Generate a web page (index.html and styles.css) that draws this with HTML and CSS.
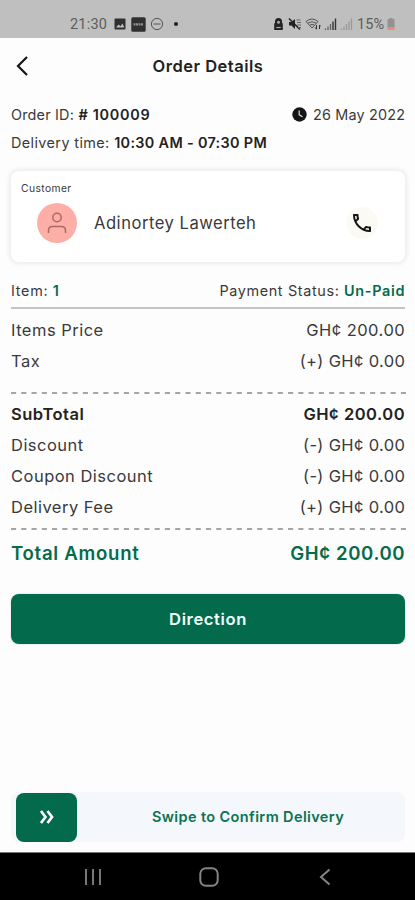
FILE: index.html
```html
<!DOCTYPE html>
<html lang="en">
<head>
<meta charset="utf-8">
<meta name="viewport" content="width=device-width, initial-scale=1">
<title>Order Details</title>
<link rel="stylesheet" href="styles.css">
</head>
<body>
<div class="screen">
  <div class="status-bar">
    <div class="status-left">
      <span class="clock">21:30</span>
      <svg class="s-photo" width="12" height="12" viewBox="0 0 12 12"><rect x=".5" y=".5" width="11" height="11" rx="1" fill="#303030"/><path d="M2 9.500l2.500-3 2 1.700L8.500 5.500l1.800 4z" fill="#bdbdbd"/></svg>
      <svg class="s-app" width="15" height="15" viewBox="0 0 15 15"><rect x=".3" y=".3" width="14.400" height="14.400" rx="1.500" fill="#303030"/><path d="M2.500 7.300h10" stroke="#8f8f8f" stroke-width="2.200" stroke-dasharray="2 .5"/></svg>
      <svg class="s-dnd" width="14" height="14" viewBox="0 0 14 14" fill="none" stroke="#555"><circle cx="7" cy="7" r="5.600"/><path d="M3.500 7h7"/></svg>
      <span class="dot"></span>
    </div>
    <div class="status-right">
      <svg class="s-lock" width="11" height="14" viewBox="0 0 11 14"><path d="M1.200 13V6.500L2 6V4.500a3.500 3.500 0 0 1 7 0V6l.8.5V13z" fill="#222"/><circle cx="5.500" cy="5.200" r="1.500" fill="#aaa"/><path d="M3.300 10.500h4.400" stroke="#aaa" stroke-width="1.200"/></svg>
      <svg width="14" height="14" viewBox="0 0 14 14"><path d="M1 5h2.500L7 2v10L3.500 8.500H1z" fill="#222"/><path d="M1 1.500l11 11" stroke="#222" stroke-width="1.500"/><path d="M8.500 3h4M9 5.500h4M9 8h4M10 10.500h3" stroke="#666"/></svg>
      <svg width="16" height="14" viewBox="0 0 16 14" fill="none" stroke="#555"><path d="M1 4.500q6-5 12 0L7 11z"/><path d="M3 6.200q4-3 8 0M5 8q2-1.400 4 0"/><path d="M11.500 8v4M10 10.500l1.500 1.800M14.500 12V8M16 9.500L14.500 8" stroke="#333"/></svg>
      <svg width="13" height="14" viewBox="0 0 13 14"><path d="M1.500 11.500v1.500M4 9.500V13M6.500 7v6" stroke="#666" stroke-width="1.300"/><path d="M9 4.500V13M11.500 1.500V13" stroke="#333" stroke-width="1.400"/></svg>
      <svg width="13" height="14" viewBox="0 0 13 14"><path d="M1.500 11.500v1.500M4 9.500V13M6.500 7v6M9 4.500V13M11.500 1.500V13" stroke="#999" stroke-width="1.300"/></svg>
      <span class="battery-text">15%</span>
      <svg width="8" height="14" viewBox="0 0 8 14"><path d="M2.500 1h3v1H7.500v9H.5V2h2z" fill="#929292"/><path d="M.5 10h7v3h-7z" fill="#ee8b78"/></svg>
    </div>
  </div>

  <header class="app-header">
    <svg class="back" width="14" height="22" viewBox="0 0 14 22"><path d="M12 2L3 11l9 9" fill="none" stroke="#151515" stroke-width="2.200"/></svg>
    <h1>Order Details</h1>
  </header>

  <main class="content">
    <div class="meta">
      <div class="pair"><span class="t-order">Order ID:</span><b class="t-num"># 100009</b></div>
      <div class="date">
        <svg width="15" height="15" viewBox="0 0 15 15"><circle cx="7.500" cy="7.500" r="7.200" fill="#151515"/><path d="M7.200 3.500v4.300l3.300 2" fill="none" stroke="#ddd" stroke-width="1.200"/></svg>
        <span class="t-date">26 May 2022</span>
      </div>
    </div>
    <div class="meta delivery"><div class="pair"><span class="t-dtime">Delivery time:</span><b class="t-time">10:30 AM - 07:30 PM</b></div></div>

    <section class="card">
      <div class="card-label">Customer</div>
      <div class="customer">
        <div class="avatar"><svg width="20" height="22" viewBox="0 0 20 22" fill="none" stroke="#a96a65" stroke-width="1.500"><circle cx="10" cy="5.500" r="4.200"/><path d="M1.500 21v-2.500q0-4 4-4h9q4 0 4 4V21"/></svg></div>
        <span class="name">Adinortey Lawerteh</span>
        <div class="call"><svg width="24" height="24" viewBox="0 0 24 24"><path fill="#151515" d="M6.540 5c.06.890.210 1.760.450 2.590l-1.200 1.200c-.410-1.200-.670-2.470-.760-3.790h1.510m9.860 12.020c.850.240 1.720.390 2.600.450v1.490c-1.320-.090-2.590-.350-3.800-.750l1.200-1.190M7.500 3H4c-.550 0-1 .450-1 1 0 9.390 7.610 17 17 17 .550 0 1-.450 1-1v-3.490c0-.550-.450-1-1-1-1.240 0-2.450-.200-3.570-.570-.360-.120-.750-.020-1.020.240l-2.200 2.200c-2.830-1.450-5.150-3.760-6.590-6.590l2.200-2.200c.280-.280.360-.670.250-1.020C8.700 6.450 8.500 5.250 8.500 4c0-.550-.450-1-1-1z"/></svg></div>
      </div>
    </section>

    <div class="item-row">
      <div class="pair"><span class="t-item">Item:</span><b class="green">1</b></div>
      <div class="pair"><span class="t-pay">Payment Status:</span><b class="green t-unpaid">Un-Paid</b></div>
    </div>

    <div class="rows first">
      <div class="row"><span>Items Price</span><span class="amt">GH¢ 200.00</span></div>
      <div class="row"><span>Tax</span><span class="amt signed">(+) GH¢ 0.00</span></div>
    </div>
    <svg class="dash" width="395" height="2"><path d="M0 1h395" stroke="#888" stroke-width="1.600" stroke-dasharray="5.130 5.130"/></svg>
    <div class="rows second">
      <div class="row strong"><span>SubTotal</span><span class="amt">GH¢ 200.00</span></div>
      <div class="row"><span>Discount</span><span class="amt signed">(-) GH¢ 0.00</span></div>
      <div class="row"><span>Coupon Discount</span><span class="amt signed">(-) GH¢ 0.00</span></div>
      <div class="row"><span>Delivery Fee</span><span class="amt signed">(+) GH¢ 0.00</span></div>
    </div>
    <svg class="dash" width="395" height="2"><path d="M0 1h395" stroke="#888" stroke-width="1.600" stroke-dasharray="5.130 5.130"/></svg>
    <div class="total"><span class="t-total">Total Amount</span><span class="t-sum">GH¢ 200.00</span></div>

    <button class="direction">Direction</button>

    <div class="swipe">
      <div class="thumb"><svg width="16" height="16" viewBox="0 0 16 16" fill="none" stroke="#fff" stroke-width="2.700"><path d="M2 2l4.500 6L2 14M8.500 2L13 8l-4.500 6"/></svg></div>
      <span class="swipe-text">Swipe to Confirm Delivery</span>
    </div>
  </main>

  <nav class="nav-bar">
    <svg width="18" height="18" viewBox="0 0 18 18"><path d="M2 1v16M9 1v16M16 1v16" stroke="#777" stroke-width="2"/></svg>
    <svg class="home" width="20" height="20" viewBox="0 0 20 20"><rect x="1.300" y="1.300" width="17.400" height="17.400" rx="5.500" fill="none" stroke="#858585" stroke-width="2"/></svg>
    <svg width="12" height="18" viewBox="0 0 12 18"><path d="M10.500 1.500L2 9l8.500 7.500" fill="none" stroke="#858585" stroke-width="2"/></svg>
  </nav>
</div>
</body>
</html>
```
FILE: styles.css
```css
* { box-sizing: border-box; }
body { margin: 0; background: #fff; font-family: Inter, Roboto, sans-serif; color: #3a3a3a; }
svg { display: block; flex: none; }
b { font-weight: 600; }
.screen { width: 415px; height: 900px; display: flex; flex-direction: column; background: #fdfdfd; overflow: hidden; white-space: nowrap; }
.status-bar { height: 38px; flex: none; background: #bfbfbf; display: flex; justify-content: space-between; padding: 10px 20px 0 70px; font-family: Roboto, sans-serif; font-size: 14.5px; color: #5c5c5c; }
.status-left, .status-right { display: flex; align-items: center; height: 28px; }
.clock { width: 44px; letter-spacing: .2px; }
.s-app { margin-left: 5px; }
.s-dnd { margin-left: 4px; }
.dot { width: 4px; height: 4px; border-radius: 50%; background: #222; margin-left: 10px; }
.status-right { gap: 3px; }
.s-lock { margin-right: 1px; }
.battery-text { margin-left: 1px; }
.app-header { height: 57px; flex: none; display: flex; align-items: center; padding: 0 0 1px 15px; }
.app-header h1 { flex: 1; margin: 0 28px 0 0; text-align: center; font-size: 16.5px; font-weight: 600; color: #222; letter-spacing: .5px; }
.content { flex: 1; display: flex; flex-direction: column; padding: 0 10px 0 11px; }
.meta { height: 38px; display: flex; align-items: center; justify-content: space-between; font-size: 14.4px; }
.pair { display: flex; gap: 4.5px; }
.meta b { color: #222; }
.t-order { letter-spacing: .2px; }
.t-num { letter-spacing: .7px; }
.t-date { letter-spacing: .18px; margin-right: -.2px; }
.t-dtime { letter-spacing: .4px; }
.t-time { letter-spacing: .33px; }
.delivery { height: 19px; }
.date { display: flex; align-items: center; gap: 6px; }
.card { margin-top: 19px; height: 91px; border-radius: 8px; background: #fff; box-shadow: 0 0 4px 2px #ececec; padding: 10px; }
.card-label { font-size: 10.3px; line-height: 14px; letter-spacing: .4px; }
.customer { display: flex; align-items: center; height: 40px; margin-top: 8px; padding: 0 17px 0 16px; }
.avatar { width: 40px; height: 40px; border-radius: 50%; background: #fdafa7; display: flex; align-items: center; justify-content: center; }
.name { margin-left: 17px; font-size: 16.6px; letter-spacing: .5px; }
.call { margin-left: auto; width: 32px; height: 32px; border-radius: 50%; background: #fbfaf5; display: flex; align-items: center; justify-content: center; }
.item-row { margin-top: 11px; height: 36px; display: flex; align-items: center; justify-content: space-between; font-size: 14.4px; border-bottom: 2px solid #c4c4c4; }
.t-item { letter-spacing: .7px; }
.t-pay { letter-spacing: .64px; }
.t-unpaid { letter-spacing: .7px; margin-right: -.1px; }
.green { color: #056b4b; }
.row { height: 31.3px; display: flex; align-items: center; justify-content: space-between; font-size: 16.5px; letter-spacing: .48px; }
.amt { margin-right: -.2px; }
.signed { letter-spacing: .34px; }
.first { padding: 5px 0 15px; }
.second { padding: 5px 0 4.8px; }
.second .row { height: 31.1px; }
.strong { font-weight: 600; color: #222; letter-spacing: .52px; }
.total { height: 46px; display: flex; align-items: center; justify-content: space-between; font-size: 18.6px; font-weight: 600; color: #056b4b; }
.t-total { letter-spacing: .72px; }
.t-sum { letter-spacing: .6px; margin-right: -.2px; }
.direction { margin-top: 18px; height: 50px; flex: none; border: 0; border-radius: 8px; background: #036a4b; color: #f0fff9; font: 600 16.6px Inter, sans-serif; letter-spacing: .6px; box-shadow: 0 0 2px #b8d0c8; }
.swipe { margin-top: auto; margin-bottom: 10px; height: 50px; flex: none; border-radius: 8px; background: #f4f7fb; display: flex; align-items: center; padding-left: 5px; }
.thumb { width: 61px; height: 49px; border-radius: 8px; background: #036a4b; display: flex; align-items: center; justify-content: center; }
.swipe-text { margin-left: 75px; padding-bottom: 2px; font-size: 14.5px; font-weight: 600; color: #0b7350; letter-spacing: .38px; }
.nav-bar { height: 48px; flex: none; background: #000; border-top: 1px solid #777; display: flex; align-items: center; justify-content: space-between; padding: 0 84px 0 84px; }
.home { margin-right: 3px; }
```
